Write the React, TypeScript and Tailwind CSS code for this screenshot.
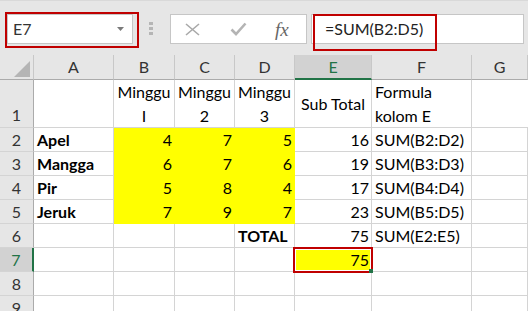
import React from 'react';

type Cell = {
  text?: string;
  align?: 'left' | 'right';
  bold?: boolean;
  fill?: boolean;
};

const COLS = ['A', 'B', 'C', 'D', 'E', 'F', 'G'];
const WIDTHS = ['w-[80px]', 'w-[61px]', 'w-[60px]', 'w-[60px]', 'w-[77px]', 'w-[100px]', 'flex-1'];

const r = (text: string, fill = false): Cell => ({ text, align: 'right', fill });
const l = (text: string, bold = false): Cell => ({ text, align: 'left', bold });

// rows 2..9 of the sheet
const ROWS: Cell[][] = [
  [l('Apel', true), r('4', true), r('7', true), r('5', true), r('16'), l('SUM(B2:D2)'), {}],
  [l('Mangga', true), r('6', true), r('7', true), r('6', true), r('19'), l('SUM(B3:D3)'), {}],
  [l('Pir', true), r('5', true), r('8', true), r('4', true), r('17'), l('SUM(B4:D4)'), {}],
  [l('Jeruk', true), r('7', true), r('9', true), r('7', true), r('23'), l('SUM(B5:D5)'), {}],
  [{}, {}, {}, l('TOTAL', true), r('75'), l('SUM(E2:E5)'), {}],
  [{}, {}, {}, {}, r('75', true), {}, {}],
  [{}, {}, {}, {}, {}, {}, {}],
  [{}, {}, {}, {}, {}, {}, {}],
];

const DataCell: React.FC<{ cell: Cell; w: string }> = ({ cell, w }) => {
  const look = cell.fill ? 'bg-[#ffff00] border-[#ffff00]' : 'bg-white border-[#d4d4d4]';
  const align = cell.align === 'right' ? 'justify-end pr-[2px]' : 'justify-start pl-[3px]';
  return (
    <div
      className={`${w} shrink-0 h-full flex items-end border-r border-b ${look} ${align} ${
        cell.bold ? 'font-bold' : ''
      } overflow-hidden whitespace-nowrap leading-[23px] text-black`}
    >
      {cell.text}
    </div>
  );
};

const App: React.FC = () => {
  return (
    <div className="relative w-[528px] h-[311px] overflow-hidden bg-white font-['Lato',sans-serif] text-[16px]">
      {/* Formula bar */}
      <div className="h-[55px] bg-[#e6e6e6] border-t border-[#d9d9d9] flex items-start pt-[13px]">
        <div className="ml-[7px] w-[126px] h-[30px] bg-white border border-[#c6c6c6] flex items-center pl-[5px] pr-[8px]">
          <span className="flex-1 text-[#333] leading-none">E7</span>
          <svg width="7" height="4" viewBox="0 0 7 4">
            <polygon points="0,0 7,0 3.5,4" fill="#7a7a7a" />
          </svg>
        </div>
        <div className="ml-[16px] mt-[8px] flex flex-col gap-[2px]">
          <div className="w-[4px] h-[3px] bg-[#b5b5b5]" />
          <div className="w-[4px] h-[3px] bg-[#b5b5b5]" />
          <div className="w-[4px] h-[3px] bg-[#b5b5b5]" />
        </div>
        <div className="ml-[17px] w-[137px] h-[30px] bg-white border border-[#c6c6c6] flex items-center">
          <svg className="ml-[14px]" width="15" height="13" viewBox="0 0 15 13">
            <path d="M1 1 L14 12 M14 1 L1 12" stroke="#a9a9a9" strokeWidth="1.6" fill="none" />
          </svg>
          <svg className="ml-[30px]" width="17" height="14" viewBox="0 0 17 14">
            <path d="M1.5 7.5 L6 12 L15.5 1.5" stroke="#b4b4b4" strokeWidth="2.6" fill="none" />
          </svg>
          <span className="ml-[28px] font-['Liberation_Serif',serif] italic text-[19px] leading-none text-[#666]">
            fx
          </span>
        </div>
        <div className="ml-[4px] w-[213px] h-[30px] bg-white border border-[#c6c6c6] flex items-center pl-[13px]">
          <span className="text-[#222] leading-none">=SUM(B2:D5)</span>
        </div>
      </div>

      {/* Column headers */}
      <div className="flex h-[25px]">
        <div className="w-[34px] shrink-0 bg-[#e6e6e6] border-r border-b border-r-[#c8c8c8] border-b-[#ababab] flex items-end justify-end pr-[3px] pb-[2px]">
          <svg width="16" height="16" viewBox="0 0 16 16">
            <polygon points="16,0 16,16 0,16" fill="#b5b5b5" />
          </svg>
        </div>
        {COLS.map((c, i) =>
          c === 'E' ? (
            <div
              key={c}
              className={`${WIDTHS[i]} shrink-0 bg-[#d2d2d2] border-r border-r-[#c8c8c8] border-b-2 border-b-[#217346] flex items-center justify-center text-[#217346]`}
            >
              {c}
            </div>
          ) : (
            <div
              key={c}
              className={`${WIDTHS[i]} shrink-0 bg-[#e6e6e6] border-r border-b border-r-[#c8c8c8] border-b-[#ababab] flex items-center justify-center text-[#333]`}
            >
              {c}
            </div>
          )
        )}
      </div>

      {/* Row 1 */}
      <div className="flex h-[48px]">
        <div className="w-[34px] shrink-0 bg-[#e6e6e6] border-r border-b border-r-[#ababab] border-b-[#d4d4d4] flex items-end justify-center leading-[24px] text-[#333]">
          1
        </div>
        <div className="w-[80px] shrink-0 border-r border-b border-[#d4d4d4]" />
        {['I', '2', '3'].map((n, i) => (
          <div
            key={n}
            className={`${WIDTHS[i + 1]} shrink-0 border-r border-b border-[#d4d4d4] flex flex-col items-center leading-[24px] text-black`}
          >
            <span>Minggu</span>
            <span>{n}</span>
          </div>
        ))}
        <div className="w-[77px] shrink-0 border-r border-b border-[#d4d4d4] flex items-center justify-center text-black">
          Sub Total
        </div>
        <div className="w-[100px] shrink-0 border-r border-b border-[#d4d4d4] flex flex-col pl-[3px] leading-[24px] text-black">
          <span>Formula</span>
          <span>kolom E</span>
        </div>
        <div className="flex-1 border-b border-[#d4d4d4]" />
      </div>

      {/* Rows 2..9 */}
      {ROWS.map((row, ri) => {
        const num = ri + 2;
        const active = num === 7;
        return (
          <div key={num} className="flex h-[24px]">
            <div
              className={`w-[34px] shrink-0 border-b border-b-[#d4d4d4] flex items-end justify-center leading-[23px] ${
                active
                  ? 'bg-[#d2d2d2] border-r-2 border-r-[#217346] text-[#217346]'
                  : 'bg-[#e6e6e6] border-r border-r-[#ababab] text-[#333]'
              }`}
            >
              {num}
            </div>
            {row.map((cell, ci) => (
              <DataCell key={ci} cell={cell} w={WIDTHS[ci]} />
            ))}
          </div>
        );
      })}

      {/* Annotation boxes */}
      <div className="absolute left-[5px] top-[12px] w-[134px] h-[36px] border-2 border-[#c00000]" />
      <div className="absolute left-[313px] top-[14px] w-[124px] h-[37px] border-2 border-[#c00000]" />
      <div className="absolute left-[293px] top-[247px] w-[80px] h-[26px] border-2 border-[#c00000] shadow-[inset_0_0_0_1px_#ffffff]" />
      <div className="absolute left-[369px] top-[269px] w-[4px] h-[4px] bg-[#217346]" />
    </div>
  );
};

export default App;
